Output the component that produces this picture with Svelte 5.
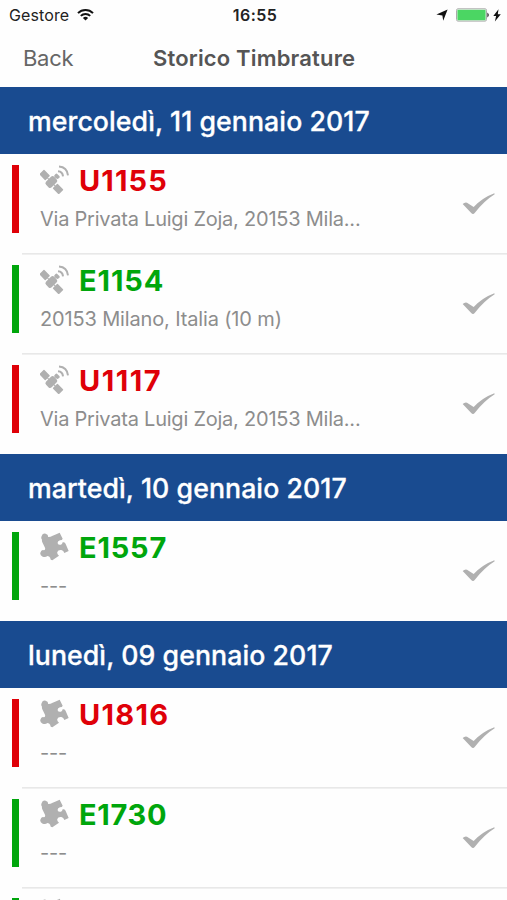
<script>
  // track: letter spacing of the code, in pixels
  const days = [
    {
      date: 'mercoledì, 11 gennaio 2017',
      items: [
        { code: 'U1155', track: 1.1, place: 'Via Privata Luigi Zoja, 20153 Mila...', icon: 'sat' },
        { code: 'E1154', track: 0.9, place: '20153 Milano, Italia (10 m)', icon: 'sat' },
        { code: 'U1117', track: 1.5, place: 'Via Privata Luigi Zoja, 20153 Mila...', icon: 'sat' }
      ]
    },
    {
      date: 'martedì, 10 gennaio 2017',
      items: [{ code: 'E1557', track: 0.8, place: '---', icon: 'puzzle' }]
    },
    {
      date: 'lunedì, 09 gennaio 2017',
      items: [
        { code: 'U1816', track: 1.3, place: '---', icon: 'puzzle' },
        { code: 'E1730', track: 0.7, place: '---', icon: 'puzzle' },
        { code: '', track: 0, place: '', icon: 'puzzle' }
      ]
    }
  ];
</script>

<div class="screen">
  <div class="status">
    <div class="carrier">
      <span>Gestore</span>
      <svg width="17" height="13" viewBox="0 0 17 13">
        <g fill="none" stroke="#111" stroke-width="2">
          <path d="M1 5.1a10.6 10.6 0 0 1 15 0" />
          <path d="M3.8 7.9a6.7 6.7 0 0 1 9.4 0" />
        </g>
        <path d="M8.5 12.6 5.9 9.9a3.8 3.8 0 0 1 5.2 0z" fill="#111" />
      </svg>
    </div>
    <span class="clock">16:55</span>
    <div class="power">
      <svg width="12" height="12" viewBox="0 0 12 12"><path d="M11.6.4 7.2 11.8 6.4 6.4 .4 5.6z" fill="#111" /></svg>
      <svg width="34" height="14" viewBox="0 0 34 14">
        <rect x=".5" y=".8" width="30" height="12.3" rx="1.5" fill="#fff" stroke="#aaa" />
        <rect x="1.4" y="1.7" width="28.2" height="10.5" rx=".8" fill="#4bd663" />
        <path d="M31.4 4.6q2.8 2.4 0 4.8z" fill="#222" />
      </svg>
      <svg width="8" height="13" viewBox="0 0 8 13"><path d="M5.5.2.3 7h2.8L1.9 12.6 7.8 5.2H4.8z" fill="#111" /></svg>
    </div>
  </div>
  <div class="nav">
    <span class="back">Back</span>
    <span class="title">Storico Timbrature</span>
  </div>

  {#each days as day}
    <h2>{day.date}</h2>
    {#each day.items as item, i}
      <div class="row" class:divided={i < day.items.length - 1} class:partial={!item.code}>
        <div class="bar" class:out={item.code[0] === 'U'}></div>
        <div class="info">
          <div class="head">
            {#if item.icon === 'sat'}
              <svg width="29" height="29" viewBox="0 0 87 87" fill="#b0b0b0">
                <g transform="rotate(46 34 51)">
                  <rect x="-8" y="41" width="26" height="20" rx="2" />
                  <rect x="22" y="34" width="24" height="34" rx="7" />
                  <rect x="50" y="41" width="26" height="20" rx="2" />
                  <path d="M17 49.5h34v3H17z" />
                </g>
                <path d="M42 33Q47 23 51 26L59 34Q61 39 53 42Q48 43 42 33z" />
                <g fill="none" stroke="#b0b0b0" stroke-width="6">
                  <path d="M54 19q14 1 15 15" />
                  <path d="M57 4.5Q81 6 84 31" />
                </g>
              </svg>
            {:else}
              <svg width="29" height="29" viewBox="0 0 87 87" fill="#b0b0b0">
                <path d="M6 23Q2 19 5 12Q8 3 17 5Q26 8 24 15Q30 16 38 11Q49 7 59 2L68 20Q67 25 60 25Q52 27 53 34Q55 40 63 38Q67 36 68 31Q75 29 77 36L86 57L73 63Q71 56 64 54Q54 53 52 60Q50 66 57 71L37 85Q30 84 31 78Q28 72 22 72Q17 77 8 74Q-1 70 1 62Q4 52 12 55Q17 54 15 47L8 33Q5 27 6 23z" />
              </svg>
            {/if}
            {#if item.code}
              <span class="code" class:out={item.code[0] === 'U'} style="letter-spacing: {item.track}px">{item.code}</span>
            {/if}
          </div>
          {#if item.place}
            <div class="place" class:long={item.place.length > 30}>{item.place}</div>
          {/if}
        </div>
        <svg class="check" width="34" height="23" viewBox="0 0 102 69">
          <path d="M2 33Q8 27 15 29L35 42Q62 14 97 1L98 4Q66 24 38 60Q33 66 27 59z" fill="#b0b0b0" />
        </svg>
      </div>
    {/each}
  {/each}
</div>

<style>
  :global(body) { margin: 0; background: #fff; overflow: hidden; }
  .screen { width: 507px; height: 900px; overflow: hidden; background: #fefefe; font-family: Inter, "Liberation Sans", sans-serif; }
  .status { height: 30px; box-sizing: border-box; padding: 0 6px 0 9px; display: grid; grid-template-columns: 1fr auto 1fr; align-items: center; color: #222; font-size: 16px; }
  .carrier { display: flex; align-items: center; gap: 8px; letter-spacing: .1px; }
  .carrier svg { margin-top: -2px; }
  .clock { font-weight: 600; letter-spacing: .5px; }
  .power { display: flex; align-items: center; justify-content: flex-end; }
  .power svg:nth-child(2) { margin: 0 3px 0 8px; }
  .nav { height: 57px; box-sizing: border-box; padding: 14px 0 0 23px; display: flex; line-height: 28px; font-size: 22px; color: #666; }
  .back { width: 130px; letter-spacing: -.3px; }
  .title { font-weight: 600; color: #555; letter-spacing: .17px; white-space: nowrap; }
  h2 { height: 67px; margin: 0; padding-left: 28px; background: #194b90; color: #fff; font-size: 26.7px; font-weight: 500; -webkit-text-stroke: .3px #fff; letter-spacing: .07px; line-height: 69px; white-space: nowrap; }
  .row { height: 100px; box-sizing: border-box; display: flex; padding: 11px 11px 0 12px; }
  .divided { background: linear-gradient(#e8e8e8, #e8e8e8) 22px 99px / 485px 1px no-repeat; }
  .divided + .row { background-image: linear-gradient(#f0f0f0, #f0f0f0), linear-gradient(#e8e8e8, #e8e8e8); background-repeat: no-repeat; background-position: 22px 0, 22px 99px; background-size: 485px 1px, 0 1px; }
  .divided + .row.divided { background-size: 485px 1px, 485px 1px; }
  .partial { padding-top: 10px; }
  .bar { width: 7px; height: 68px; background: #00a60c; }
  .bar.out { background: #df0008; }
  .info { flex: 1; margin-left: 21px; }
  .head { height: 30px; display: flex; gap: 10px; }
  .code { font-size: 29px; font-weight: 700; line-height: 31px; color: #00a60c; }
  .code.out { color: #df0008; }
  .place { margin-top: 10px; color: #8d8d8d; font-size: 20px; line-height: 28px; letter-spacing: -.15px; white-space: nowrap; }
  .place.long { letter-spacing: -.23px; }
  .check { margin-top: 28px; }
</style>
